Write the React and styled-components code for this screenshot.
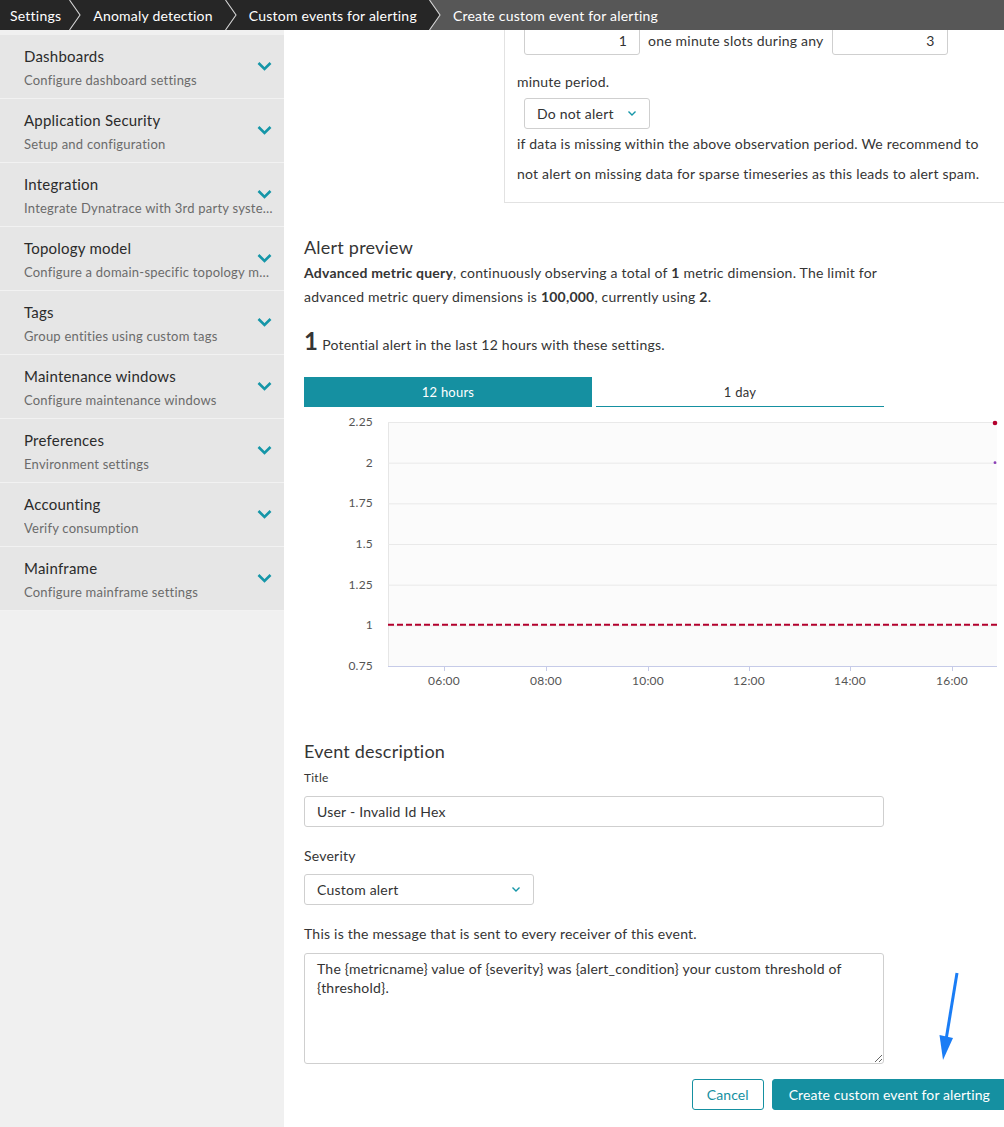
import React from "react";
import styled, { createGlobalStyle } from "styled-components";

const TEAL = "#1590a1";

const GlobalStyle = createGlobalStyle`
  html, body { margin: 0; padding: 0; overflow: hidden; background: #fff; }
  body { font-family: Lato, "Liberation Sans", sans-serif; color: #353535; letter-spacing: 0.22px; }
  * { box-sizing: border-box; }
`;

const Page = styled.div`
  position: relative;
  width: 1004px;
  height: 1127px;
  display: flex;
  flex-direction: column;
  overflow: hidden;
`;

const TopBar = styled.div`
  height: 30px;
  flex: none;
  display: flex;
  background: #262626;
  position: relative;
  z-index: 2;
`;

const Crumb = styled.div`
  display: flex;
  align-items: center;
  height: 30px;
  padding: 0 ${(p) => (p.$first ? 8 : 12)}px 0 ${(p) => (p.$first ? 10 : 12)}px;
  font-size: 14px;
  color: #fff;
  white-space: nowrap;
  background: ${(p) => (p.$current ? "#575757" : "#262626")};
  flex: ${(p) => (p.$current ? 1 : "none")};
`;

const SepSvg = styled.svg`
  display: block;
  flex: none;
`;

const Separator = ({ left, right }) => (
  <SepSvg width="12" height="30" viewBox="0 0 12 30">
    <rect x="0" y="0" width="12" height="30" fill={right} />
    <polygon points="0,0 11,15 0,30" fill={left} />
    <polyline points="0.5,0 11,15 0.5,30" fill="none" stroke="#d4d4d4" strokeWidth="1.1" />
  </SepSvg>
);

const Body = styled.div`
  flex: 1;
  display: flex;
  min-height: 0;
`;

const Sidebar = styled.nav`
  width: 284px;
  flex: none;
  background: #f0f0f0;
  padding-top: 5px;
`;

const NavItem = styled.div`
  position: relative;
  height: 64px;
  background: #e6e6e6;
  border-bottom: 1px solid #f2f2f2;
  padding: 11px 8px 0 24px;
`;

const NavTitle = styled.div`
  font-size: 15px;
  line-height: 20px;
  color: #2b2b2b;
`;

const NavSub = styled.div`
  margin-top: 5px;
  font-size: 13px;
  line-height: 18px;
  color: #6b6b6b;
  white-space: nowrap;
  overflow: hidden;
  text-overflow: ellipsis;
`;

const ChevronBox = styled.svg`
  position: absolute;
  right: 12px;
  top: 26px;
`;

const NavChevron = () => (
  <ChevronBox width="15" height="10" viewBox="0 0 15 10">
    <polyline points="1.5,2 7.5,8 13.5,2" fill="none" stroke="#1596a8" strokeWidth="2.6" />
  </ChevronBox>
);

const Main = styled.main`
  flex: 1;
  min-width: 0;
  padding-left: 20px;
  overflow: hidden;
`;

const Panel = styled.section`
  margin: -16px -10px 0 200px;
  border: 1px solid #e2e2e2;
  padding: 10px 0 13px 12px;
  font-size: 14px;
`;

const InlineRow = styled.div`
  display: flex;
  align-items: center;
  height: 30px;
`;

const NumInput = styled.div`
  width: 116px;
  height: 30px;
  border: 1px solid #cfcfcf;
  border-radius: 3px;
  display: flex;
  align-items: center;
  justify-content: flex-end;
  padding-right: 12px;
  font-size: 14px;
  color: #333;
  margin: 0 8px 0 ${(p) => p.$ml}px;
`;

const Line = styled.div`
  font-size: 14px;
  line-height: 30px;
  white-space: nowrap;
  margin-top: ${(p) => p.$mt || 0}px;
`;

const SelectBox = styled.div`
  width: ${(p) => p.$w}px;
  height: 31px;
  margin: ${(p) => p.$m || "0"};
  border: 1px solid #cfcfcf;
  border-radius: 3px;
  display: flex;
  align-items: center;
  justify-content: space-between;
  padding: 0 12px 0 12px;
  font-size: 14px;
  color: #333;
`;

const SmallChevron = () => (
  <svg width="10" height="7" viewBox="0 0 10 7">
    <polyline points="1.5,1.5 5,5 8.5,1.5" fill="none" stroke="#1596a8" strokeWidth="1.4" />
  </svg>
);

const Heading = styled.h2`
  margin: ${(p) => p.$mt}px 0 0;
  font-size: 18px;
  line-height: 24px;
  font-weight: 400;
  color: #353535;
`;

const Para = styled.p`
  margin: 2px 0 0;
  font-size: 14px;
  line-height: 24px;
  width: 620px;
  color: #353535;
  white-space: nowrap;
`;

const Potential = styled.div`
  margin-top: 17px;
  font-size: 14px;
  line-height: 30px;
  display: flex;
  align-items: baseline;
  gap: 4px;
`;

const BigNum = styled.span`
  font-size: 24px;
  font-weight: 700;
`;

const Tabs = styled.div`
  margin-top: 17px;
  width: 580px;
  display: flex;
  gap: 4px;
`;

const Tab = styled.div`
  flex: 1;
  height: 30px;
  display: flex;
  align-items: center;
  justify-content: center;
  font-size: 13px;
  color: ${(p) => (p.$active ? "#fff" : "#333")};
  background: ${(p) => (p.$active ? TEAL : "transparent")};
  border-bottom: ${(p) => (p.$active ? "none" : `1.5px solid ${TEAL}`)};
`;

const ChartSvg = styled.svg`
  display: block;
  margin-top: 3px;
`;

const Label = styled.div`
  margin-top: ${(p) => p.$mt}px;
  font-size: ${(p) => p.$size || 14}px;
  line-height: 20px;
  color: #353535;
`;

const TextField = styled.div`
  margin-top: 8px;
  width: 580px;
  height: 31px;
  border: 1px solid #cfcfcf;
  border-radius: 3px;
  display: flex;
  align-items: center;
  padding-left: 12px;
  font-size: 14px;
  color: #333;
`;

const TextArea = styled.textarea`
  display: block;
  margin-top: 9px;
  width: 580px;
  height: 111px;
  border: 1px solid #cfcfcf;
  border-radius: 3px;
  padding: 5px 12px;
  font-family: Lato, "Liberation Sans", sans-serif;
  letter-spacing: 0.22px;
  font-size: 14px;
  line-height: 19px;
  color: #333;
  resize: both;
  outline: none;
`;

const ButtonRow = styled.div`
  margin: 15px -3px 0 0;
  display: flex;
  justify-content: flex-end;
  gap: 8px;
`;

const Button = styled.button`
  height: 31px;
  padding: 0 ${(p) => (p.$primary ? 16 : 14)}px;
  border-radius: 3px;
  border: 1px solid ${TEAL};
  background: ${(p) => (p.$primary ? TEAL : "#fff")};
  color: ${(p) => (p.$primary ? "#fff" : TEAL)};
  font-family: Lato, "Liberation Sans", sans-serif;
  letter-spacing: 0.1px;
  font-size: 14px;
  cursor: pointer;
`;

const ArrowSvg = styled.svg`
  position: absolute;
  left: 930px;
  top: 965px;
  pointer-events: none;
`;

const navItems = [
  ["Dashboards", "Configure dashboard settings"],
  ["Application Security", "Setup and configuration"],
  ["Integration", "Integrate Dynatrace with 3rd party systems"],
  ["Topology model", "Configure a domain-specific topology model"],
  ["Tags", "Group entities using custom tags"],
  ["Maintenance windows", "Configure maintenance windows"],
  ["Preferences", "Environment settings"],
  ["Accounting", "Verify consumption"],
  ["Mainframe", "Configure mainframe settings"],
];

const Chart = () => {
  const x0 = 84, x1 = 693, top = 12, bottom = 256;
  const step = (bottom - top) / 6;
  const yLabels = ["2.25", "2", "1.75", "1.5", "1.25", "1", "0.75"];
  const xLabels = [["06:00", 140], ["08:00", 242], ["10:00", 344], ["12:00", 445], ["14:00", 546], ["16:00", 648]];
  return (
    <ChartSvg width="700" height="292" viewBox="0 0 700 292">
      <rect x={x0} y={top} width={x1 - x0} height={bottom - top} fill="#fbfbfb" />
      <line x1={x0 + 0.5} y1={top} x2={x0 + 0.5} y2={bottom} stroke="#e6e6e6" />
      {yLabels.map((l, i) => {
        const y = top + i * step;
        return (
          <g key={l}>
            {i < 6 && <line x1={x0} y1={y + 0.5} x2={x1} y2={y + 0.5} stroke="#e9e9e9" />}
            <text x="69" y={y + 4} textAnchor="end" fontSize="12" fill="#555" fontFamily="Lato, sans-serif">{l}</text>
          </g>
        );
      })}
      <line x1={x0} y1={bottom + 0.5} x2={x1} y2={bottom + 0.5} stroke="#c6cbe8" />
      {xLabels.map(([l, x]) => (
        <g key={l}>
          <line x1={x + 0.5} y1={bottom} x2={x + 0.5} y2={bottom + 5} stroke="#c6cbe8" />
          <text x={x} y="275" textAnchor="middle" fontSize="12" fill="#555" fontFamily="Lato, sans-serif">{l}</text>
        </g>
      ))}
      <line x1={x0} y1={top + 5 * step - 0.5} x2={x1} y2={top + 5 * step - 0.5} stroke="#b3002d" strokeWidth="2" strokeDasharray="6 3" />
      <circle cx="691" cy={top + 1} r="2.3" fill="#b3002d" />
      <circle cx="691" cy={top + step} r="1.4" fill="#8b3fb6" />
    </ChartSvg>
  );
};

export default function App() {
  return (
    <>
      <GlobalStyle />
      <Page>
        <TopBar>
          <Crumb $first>Settings</Crumb>
          <Separator left="#262626" right="#262626" />
          <Crumb>Anomaly detection</Crumb>
          <Separator left="#262626" right="#262626" />
          <Crumb>Custom events for alerting</Crumb>
          <Separator left="#262626" right="#575757" />
          <Crumb $current>Create custom event for alerting</Crumb>
        </TopBar>
        <Body>
          <Sidebar>
            {navItems.map(([t, s]) => (
              <NavItem key={t}>
                <NavTitle>{t}</NavTitle>
                <NavSub>{s}</NavSub>
                <NavChevron />
              </NavItem>
            ))}
          </Sidebar>
          <Main>
            <Panel>
              <InlineRow>
                <NumInput $ml={7}>1</NumInput>
                <span>one minute slots during any</span>
                <NumInput $ml={8}>3</NumInput>
              </InlineRow>
              <Line $mt={12}>minute period.</Line>
              <SelectBox $w={126} $m="1px 0 0 7px">
                Do not alert <SmallChevron />
              </SelectBox>
              <Line>if data is missing within the above observation period. We recommend to</Line>
              <Line>not alert on missing data for sparse timeseries as this leads to alert spam.</Line>
            </Panel>

            <Heading $mt={32}>Alert preview</Heading>
            <Para>
              <b>Advanced metric query</b>, continuously observing a total of <b>1</b> metric dimension. The limit for
              <br />
              advanced metric query dimensions is <b>100,000</b>, currently using <b>2</b>.
            </Para>
            <Potential>
              <BigNum>1</BigNum>
              <span>Potential alert in the last 12 hours with these settings.</span>
            </Potential>
            <Tabs>
              <Tab $active>12 hours</Tab>
              <Tab>1 day</Tab>
            </Tabs>
            <Chart />

            <Heading $mt={37}>Event description</Heading>
            <Label $mt={5} $size={12}>Title</Label>
            <TextField>User - Invalid Id Hex</TextField>
            <Label $mt={19}>Severity</Label>
            <SelectBox $w={230} $m="8px 0 0 0">
              Custom alert <SmallChevron />
            </SelectBox>
            <Label $mt={19}>This is the message that is sent to every receiver of this event.</Label>
            <TextArea
              readOnly
              defaultValue="The {metricname} value of {severity} was {alert_condition} your custom threshold of {threshold}."
            />
            <ButtonRow>
              <Button>Cancel</Button>
              <Button $primary>Create custom event for alerting</Button>
            </ButtonRow>
          </Main>
        </Body>
        <ArrowSvg width="40" height="100" viewBox="930 965 40 100">
          <line x1="957" y1="973" x2="946" y2="1040" stroke="#1a7df5" strokeWidth="3" />
          <polygon points="939.5,1035 953,1038 943,1060" fill="#1a7df5" />
        </ArrowSvg>
      </Page>
    </>
  );
}
